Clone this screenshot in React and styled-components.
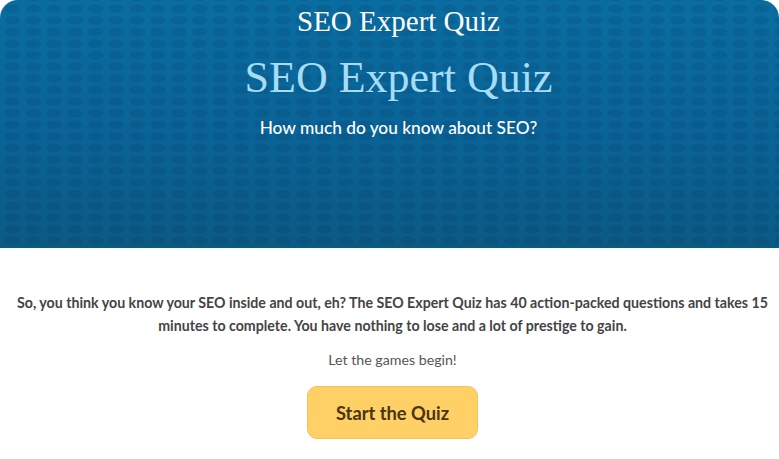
import styled, { createGlobalStyle } from "styled-components";

const GlobalStyle = createGlobalStyle`
  html, body {
    margin: 0;
    padding: 0;
    background: #fff;
  }
`;

const Page = styled.div`
  width: 779px;
  height: 459px;
  overflow: hidden;
  background: #fff;
`;

const Hero = styled.header`
  height: 248px;
  box-sizing: border-box;
  padding-left: 18px;
  border-radius: 18px 18px 0 0;
  display: flex;
  flex-direction: column;
  align-items: center;
  background-color: #0a6496;
  background-image:
    radial-gradient(ellipse 8px 4.5px at center, rgba(0, 40, 80, 0.13) 92%, transparent 100%),
    linear-gradient(180deg, #0a6da1 0%, #0a6396 55%, #0b5a84 100%);
  background-size: 20.8px 11.6px, 100% 100%;
  background-position: 2px 3px, 0 0;
`;

const SiteTitle = styled.div`
  margin-top: 5px;
  font-family: "Liberation Serif", "DejaVu Serif", serif;
  font-size: 29px;
  color: #fff;
`;

const QuizTitle = styled.h1`
  margin: 14px 0 0;
  font-family: "Liberation Serif", "DejaVu Serif", serif;
  font-weight: 400;
  font-size: 44px;
  color: #a6dcf6;
`;

const Tagline = styled.p`
  margin: 14px 0 0;
  font-family: Lato, "Open Sans", sans-serif;
  font-size: 17.3px;
  font-weight: 500;
  color: #fff;
`;

const Body = styled.main`
  display: flex;
  flex-direction: column;
  align-items: center;
  padding: 43px 7px 0 13px;
  font-family: Lato, "Open Sans", sans-serif;
  text-align: center;
`;

const Intro = styled.p`
  margin: 0;
  font-size: 14.2px;
  font-weight: 700;
  line-height: 23px;
  color: #444;
`;

const Note = styled.p`
  margin: 14px 0 0;
  font-size: 14.2px;
  color: #555;
`;

const StartButton = styled.button`
  margin-top: 18px;
  width: 171px;
  height: 53px;
  border: 1px solid #f1c35a;
  border-radius: 10px;
  background: #fed065;
  font-family: Lato, "Open Sans", sans-serif;
  font-size: 18.3px;
  font-weight: 700;
  color: #4a3412;
  cursor: pointer;
`;

const App = () => {
  return (
    <Page>
      <GlobalStyle />
      <Hero>
        <SiteTitle>SEO Expert Quiz</SiteTitle>
        <QuizTitle>SEO Expert Quiz</QuizTitle>
        <Tagline>How much do you know about SEO?</Tagline>
      </Hero>
      <Body>
        <Intro>
          So, you think you know your SEO inside and out, eh? The SEO Expert Quiz has 40 action-packed questions and takes 15
          <br />
          minutes to complete. You have nothing to lose and a lot of prestige to gain.
        </Intro>
        <Note>Let the games begin!</Note>
        <StartButton>Start the Quiz</StartButton>
      </Body>
    </Page>
  );
};

export default App;
